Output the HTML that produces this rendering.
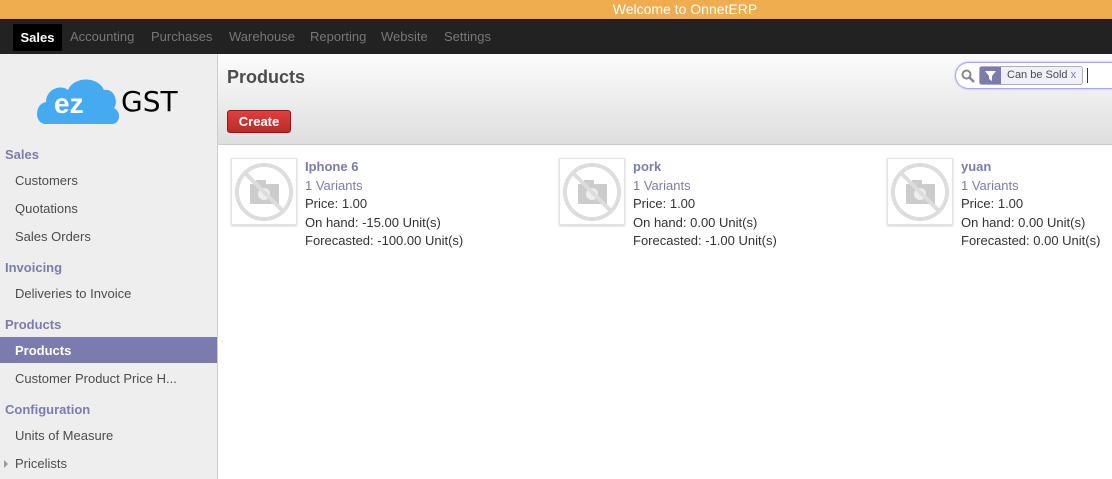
<!DOCTYPE html>
<html><head><meta charset="utf-8"><style>
*{margin:0;padding:0;box-sizing:border-box}
body{width:1112px;height:479px;overflow:hidden;font-family:"Liberation Sans",Arial,sans-serif;font-size:13px;color:#4c4c4c;background:#fff;position:relative}
.top{position:absolute;left:0;top:0;width:1112px;height:19px;background:#efad4f;color:#fff;text-align:center;font-size:14px;line-height:19px;padding-left:258px}
.nav{position:absolute;top:19px;left:0;width:1112px;height:35px;background:#222;border-top:1px solid #111}
.nav span{position:absolute;top:9px;color:#777;font-size:13px}
.nav .act{left:13px;top:4px;width:49px;height:27px;background:#000;color:#fff;line-height:27px;text-align:center;font-weight:bold}
.side{position:absolute;left:0;top:54px;width:218px;height:425px;background:#efeeef;border-right:1px solid #ccc}
.side .h{position:absolute;left:5px;color:#7c7bad;font-weight:bold;font-size:13px}
.side .i{position:absolute;left:15px;color:#4c4c4c;font-size:13px}
.side .sel{position:absolute;left:0;top:283px;width:217px;height:26px;background:#7c7bad}
.hdr{position:absolute;left:218px;top:54px;width:894px;height:91px;background:linear-gradient(#fcfcfc,#dedede);border-bottom:1px solid #cacaca}
.title{position:absolute;left:9px;top:13px;font-size:18px;font-weight:bold;color:#4c4c4c}
.btn{position:absolute;left:9px;top:56px;width:64px;height:23px;background:linear-gradient(#df3f3f,#b92c28);border:1px solid #8b1a1a;border-radius:3px;color:#fff;font-weight:bold;font-size:13px;text-align:center;line-height:21px}
.search{position:absolute;left:737px;top:8px;width:170px;height:27px;border:1px solid #a6a6fe;border-radius:14px 0 0 14px;border-right:none;background:#fff;box-shadow:0 0 2px #a6a6fe}
.facet{position:absolute;left:23px;top:3px;height:19px;width:104px;border:1px solid #afafb6;border-radius:3px;background:#f0f0fa;font-size:11px;line-height:17px}
.facet .ic{position:absolute;left:0;top:0;width:21px;height:17px;background:#7c7bad}
.card{position:absolute;top:158px}
.img{position:absolute;left:0;top:0;width:66px;height:67px;border:1px solid #e4e4e4;box-shadow:0 1px 2px #ccc;background:#fff}
.txt{position:absolute;left:74px;top:0;line-height:18.5px;white-space:nowrap;font-size:13px;color:#333}
.txt b{color:#7c7bad}
.txt .v{color:#7c7bad}
</style></head><body>
<div class="top">Welcome to OnnetERP</div>
<div class="nav">
<span class="act">Sales</span>
<span style="left:70px">Accounting</span>
<span style="left:151px">Purchases</span>
<span style="left:229px">Warehouse</span>
<span style="left:310px">Reporting</span>
<span style="left:381px">Website</span>
<span style="left:444px">Settings</span>
</div>
<div class="side">
<svg style="position:absolute;left:36px;top:20px" width="150" height="55" viewBox="0 0 150 55">
<path d="M10 50 C-2 50 -2 30 10 28 C10 15 25 10 32 16 C38 2 62 2 68 16 C80 14 82 30 78 34 C86 38 84 50 76 50 Z" fill="#45aaf0"/>
<text x="18" y="39" font-family="Liberation Sans" font-weight="bold" font-size="28" fill="#fff">ez</text>
<text x="85" y="37" font-family="DejaVu Sans" font-size="28" fill="#000">GST</text>
</svg>
<div class="h" style="top:93px">Sales</div>
<div class="i" style="top:119px">Customers</div>
<div class="i" style="top:147px">Quotations</div>
<div class="i" style="top:175px">Sales Orders</div>
<div class="h" style="top:206px">Invoicing</div>
<div class="i" style="top:232px">Deliveries to Invoice</div>
<div class="h" style="top:263px">Products</div>
<div class="sel"></div>
<div class="i" style="top:289px;color:#fff;font-weight:bold">Products</div>
<div class="i" style="top:317px">Customer Product Price H...</div>
<div class="h" style="top:348px">Configuration</div>
<div class="i" style="top:374px">Units of Measure</div>
<div style="position:absolute;left:4px;top:406px;width:0;height:0;border-left:4px solid #999;border-top:4px solid transparent;border-bottom:4px solid transparent"></div>
<div class="i" style="top:402px">Pricelists</div>
</div>
<div class="hdr">
<div class="title">Products</div>
<div class="btn">Create</div>
<div class="search">
<svg style="position:absolute;left:5px;top:6px" width="14" height="14"><circle cx="5.5" cy="5.5" r="4" fill="none" stroke="#888" stroke-width="2"/><path d="M8.5 8.5 L13 13" stroke="#888" stroke-width="2.5"/></svg>
<div class="facet"><div class="ic"><svg width="21" height="17"><path d="M5 4 H16 L12 9 V14 L9 12 V9 Z" fill="#fff"/></svg></div><span style="position:absolute;left:27px">Can be Sold <span style="color:#7c7bad">x</span></span></div>
<div style="position:absolute;left:131px;top:5px;width:1px;height:15px;background:#333"></div>
</div>
</div>
<div class="card" style="left:231px"><div class="img"><svg width="64" height="65"><circle cx="32" cy="33" r="27" fill="none" stroke="#ddd" stroke-width="4"/><rect x="18" y="25" width="29" height="20" fill="#ccc"/><rect x="24" y="21" width="10" height="5" fill="#ccc"/><circle cx="32" cy="35" r="6" fill="#eee"/><path d="M13 14 L52 53" stroke="#ddd" stroke-width="4"/></svg></div>
<div class="txt"><b>Iphone 6</b><br><span class="v">1 Variants</span><br>Price: 1.00<br>On hand: -15.00 Unit(s)<br>Forecasted: -100.00 Unit(s)</div></div>
<div class="card" style="left:559px"><div class="img"><svg width="64" height="65"><circle cx="32" cy="33" r="27" fill="none" stroke="#ddd" stroke-width="4"/><rect x="18" y="25" width="29" height="20" fill="#ccc"/><rect x="24" y="21" width="10" height="5" fill="#ccc"/><circle cx="32" cy="35" r="6" fill="#eee"/><path d="M13 14 L52 53" stroke="#ddd" stroke-width="4"/></svg></div>
<div class="txt"><b>pork</b><br><span class="v">1 Variants</span><br>Price: 1.00<br>On hand: 0.00 Unit(s)<br>Forecasted: -1.00 Unit(s)</div></div>
<div class="card" style="left:887px"><div class="img"><svg width="64" height="65"><circle cx="32" cy="33" r="27" fill="none" stroke="#ddd" stroke-width="4"/><rect x="18" y="25" width="29" height="20" fill="#ccc"/><rect x="24" y="21" width="10" height="5" fill="#ccc"/><circle cx="32" cy="35" r="6" fill="#eee"/><path d="M13 14 L52 53" stroke="#ddd" stroke-width="4"/></svg></div>
<div class="txt"><b>yuan</b><br><span class="v">1 Variants</span><br>Price: 1.00<br>On hand: 0.00 Unit(s)<br>Forecasted: 0.00 Unit(s)</div></div>
</body></html>
